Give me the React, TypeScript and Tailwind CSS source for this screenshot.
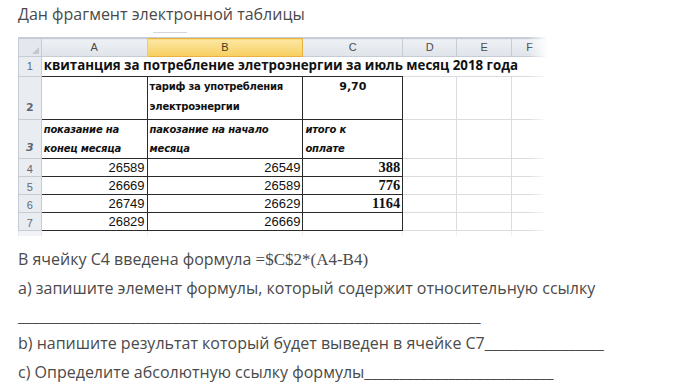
import React from 'react';

const cols = ['A', 'B', 'C', 'D', 'E', 'F'];

const rows = [
  { n: 4, a: '26589', b: '26549', c: '388' },
  { n: 5, a: '26669', b: '26589', c: '776' },
  { n: 6, a: '26749', b: '26629', c: '1164' },
  { n: 7, a: '26829', b: '26669', c: '' },
];

const dark = 'border border-[#2b2b2b]';
const light = 'border border-[#dadcdd]';
const rowHead = 'border border-[#c5ccd6] bg-[#e9edf2] text-center text-[11px] text-[#5d6877] align-bottom pb-[1px]';

function Sheet() {
  return (
    <div className="relative mt-[4px] w-[530px] font-['Liberation_Sans',sans-serif]">
      <div className="h-[8px] border-b border-[#c9ced6]">
        <div className="ml-[135px] h-[3px] w-[34px] border-b border-[#d3d7dd]" />
      </div>
      <table className="table-fixed border-collapse">
        <colgroup>
          <col className="w-[23px]" />
          <col className="w-[106px]" />
          <col className="w-[156px]" />
          <col className="w-[100px]" />
          <col className="w-[54px]" />
          <col className="w-[55px]" />
          <col className="w-[36px]" />
        </colgroup>
        <thead>
          <tr className="h-[17px] text-[11px] text-[#4b4b4b]">
            <th className="border border-[#c5ccd6] bg-[#e4e8ee] font-normal">
              <div className="ml-auto mr-[2px] h-0 w-0 border-l-[7px] border-t-[7px] border-l-transparent border-t-transparent border-r-0 border-b-[7px] border-b-[#c3c8cf]" />
            </th>
            {cols.map((c) =>
              c === 'B' ? (
                <th key={c} className="border border-[#e8b23f] bg-gradient-to-b from-[#fce7a3] to-[#f8cf5c] font-normal text-[#3f3a20]">
                  {c}
                </th>
              ) : (
                <th key={c} className="border border-[#c5ccd6] bg-gradient-to-b from-[#eef1f5] to-[#dfe4ea] font-normal">
                  {c}
                </th>
              ),
            )}
          </tr>
        </thead>
        <tbody className="text-[#111]">
          <tr className="h-[20px]">
            <td className={rowHead}>1</td>
            <td colSpan={6} className="border-b-0 border-r border-[#dadcdd] whitespace-nowrap pl-[2px] text-[13.3px] font-bold font-['Open_Sans',sans-serif] leading-none">
              квитанция за потребление элетроэнергии за июль месяц 2018 года
            </td>
          </tr>
          <tr className="h-[43px] text-[10px] font-bold font-['DejaVu_Sans',sans-serif] leading-[20px]">
            <td className={rowHead}>2</td>
            <td className={`${dark} border-l-[#dadcdd]`} />
            <td className={`${dark} align-top pl-[2px] tracking-[-0.2px]`}>
              тариф за употребления
              <br />
              электроэнергии
            </td>
            <td className={`${dark} align-top text-center text-[11px]`}>9,70</td>
            <td className={light} />
            <td className={light} />
            <td className={light} />
          </tr>
          <tr className="h-[39px] text-[10px] font-bold italic font-['DejaVu_Sans',sans-serif] leading-[19px]">
            <td className={rowHead}>3</td>
            <td className={`${dark} border-l-[#dadcdd] pl-[2px] tracking-[-0.2px]`}>
              показание на
              <br />
              конец месяца
            </td>
            <td className={`${dark} pl-[2px] tracking-[-0.2px]`}>
              пакозание на начало
              <br />
              месяца
            </td>
            <td className={`${dark} pl-[2px] tracking-[-0.2px]`}>
              итого к
              <br />
              оплате
            </td>
            <td className={light} />
            <td className={light} />
            <td className={light} />
          </tr>
          {rows.map((r) => (
            <tr key={r.n} className="h-[18px] text-[13px] leading-none">
              <td className={rowHead}>{r.n}</td>
              <td className={`${dark} border-l-[#dadcdd] text-right pr-[2px]`}>{r.a}</td>
              <td className={`${dark} text-right pr-[2px]`}>{r.b}</td>
              <td className={`${dark} text-right pr-[2px] font-['Liberation_Serif',serif] font-bold text-[14.5px]`}>{r.c}</td>
              <td className={light} />
              <td className={light} />
              <td className={light} />
            </tr>
          ))}
          <tr className="h-[6px]">
            <td className="border-x border-[#e3e6ea] bg-[#f1f3f6]" />
            <td className="border-r border-[#eeeeee]" />
            <td className="border-r border-[#eeeeee]" />
            <td className="border-r border-[#eeeeee]" />
            <td className="border-r border-[#eeeeee]" />
            <td className="border-r border-[#eeeeee]" />
            <td />
          </tr>
        </tbody>
      </table>
      <div className="pointer-events-none absolute right-0 top-0 h-full w-[20px] bg-gradient-to-r from-transparent to-white" />
    </div>
  );
}

export default function App() {
  return (
    <div className="h-[388px] w-[674px] bg-white pl-[18px] pt-[2px] font-['Open_Sans',sans-serif] text-[16px] text-[#4a4a4a]">
      <p className="leading-[24px]">Дан фрагмент электронной таблицы</p>
      <Sheet />
      <div className="mt-[9px] leading-[29px]">
        <p>
          В ячейку С4 введена формула <span className="font-['Liberation_Serif',serif] text-[17px]">=$C$2*(A4-B4)</span>
        </p>
        <p>а) запишите элемент формулы, который содержит относительную ссылку</p>
        <p className="leading-[26px]">__________________________________________________________________</p>
        <p>b) напишите результат который будет выведен в ячейке C7_________________</p>
        <p>c) Определите абсолютную ссылку формулы___________________________</p>
      </div>
    </div>
  );
}
